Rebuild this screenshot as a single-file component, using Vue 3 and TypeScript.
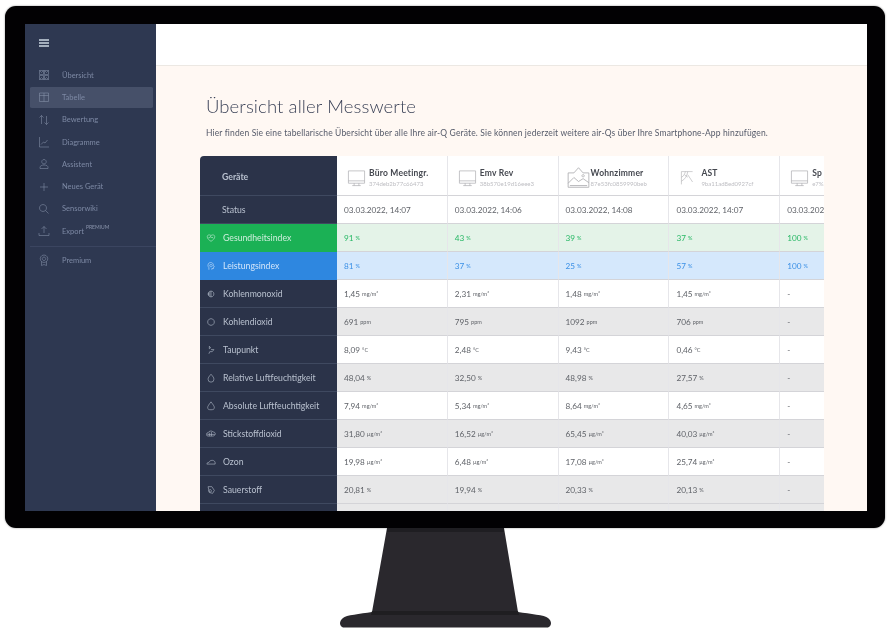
<template>
  <div class="page">
    <div class="monitor">
      <div class="screen">
        <aside class="side">
          <div class="burger"><span></span><span></span><span></span></div>
          <nav class="nav">
            <div v-for="n in nav" :key="n.label" class="nav-item" :class="{ active: n.active, gapped: n.label === 'Premium' }">
              <svg class="nav-icon" viewBox="0 0 24 24" fill="none" stroke="currentColor" stroke-width="1"><path :d="n.icon" /></svg>
              <span class="nav-label">{{ n.label }}</span>
              <sup v-if="n.label === 'Export'" class="sup">PREMIUM</sup>
            </div>
          </nav>
        </aside>
        <main class="main">
          <div class="topbar"></div>
          <div class="content">
            <h1>Übersicht aller Messwerte</h1>
            <p>Hier finden Sie eine tabellarische Übersicht über alle Ihre air-Q Geräte. Sie können jederzeit weitere air-Qs über Ihre Smartphone-App hinzufügen.</p>
            <div class="table">
              <div class="row head">
                <div class="label"><span class="label-text">Geräte</span></div>
                <div v-for="d in devices" :key="d.name" class="cell device">
                  <svg class="dev-icon" :class="'kind-' + d.kind" viewBox="0 0 20 18" fill="none" stroke="#a9a9ad" stroke-width=".7"><path :d="iconFor(d.kind)" /></svg>
                  <div class="dev-text">
                    <div class="dev-name">{{ d.name }}</div>
                    <div class="dev-id">{{ d.id }}</div>
                  </div>
                </div>
              </div>
              <div class="row status">
                <div class="label"><span class="label-text">Status</span></div>
                <div v-for="(s, i) in statuses" :key="i" class="cell">{{ s }}</div>
              </div>
              <div v-for="(r, ri) in rows" :key="r.name" class="row" :class="[r.tone ?? (ri % 2 === 0 ? 'even' : 'odd')]">
                <div class="label">
                  <svg class="row-icon" viewBox="0 0 24 24" fill="none" stroke="currentColor" stroke-width="1.4"><path :d="r.icon" /></svg>
                  <span class="label-text">{{ r.name }}</span>
                </div>
                <div v-for="(v, i) in r.values" :key="i" class="cell">
                  <span>{{ v }}</span><small v-if="v !== '-'">{{ r.unit }}</small>
                </div>
              </div>
              <div class="row odd">
                <div class="label"></div>
                <div v-for="i in 5" :key="i" class="cell"></div>
              </div>
            </div>
          </div>
        </main>
      </div>
    </div>
    <svg class="stand" width="890" height="106" viewBox="0 0 890 106">
      <path d="M387 0H504L518 84C530 86 545 87 548 90C552 93 552 98 548 99.500H343C339 98 339 93 343 90C346 87 360 86 372 84Z" fill="#2a282d" />
      <path d="M387 0H504V4H387Z" fill="#1f1e22" />
      <path d="M372 83H518L519 87H371Z" fill="#1f1e21" />
    </svg>
  </div>
</template>

<script setup lang="ts">
type Kind = 'monitor' | 'picture' | 'web'

const nav = [
  { label: 'Übersicht', icon: 'M3 3h8v8H3zM13 3h8v8h-8zM3 13h8v8H3zM13 13h8v8h-8zM7 7l-4-4M7 7l4-4M17 7l-4-4M17 7l4-4M7 17l-4 4M7 17l4 4M17 17l-4 4M17 17l4 4' },
  { label: 'Tabelle', active: true, icon: 'M3 4h18v17H3zM3 9h18M12 4v17' },
  { label: 'Bewertung', icon: 'M7 20V3M3 7l4-4 4 4M17 4v17M13 17l4 4 4-4' },
  { label: 'Diagramme', icon: 'M3 2v20h19M6 17l5-5 3 2 5-6' },
  { label: 'Assistent', icon: 'M12 3a4.500 4.500 0 1 0 .01 0M4 21v-2c0-3 3-5 8-5s8 2 8 5v2z' },
  { label: 'Neues Gerät', icon: 'M12 4v16M4 12h16' },
  { label: 'Sensorwiki', icon: 'M10 3a7 7 0 1 0 .01 0M15 15l6 6' },
  { label: 'Export', icon: 'M12 16V3M7 8l5-5 5 5M2 16v5h20v-5' },
  { label: 'Premium', icon: 'M12 2a7.500 7.500 0 1 0 .01 0M12 6a3.500 3.500 0 1 0 .01 0M7 15v8l5-2 5 2v-8' },
]

const devices: { name: string; id: string; kind: Kind }[] = [
  { name: 'Büro Meetingr.', id: '374deb2b77c66473', kind: 'monitor' },
  { name: 'Emv Rev', id: '38b570e19d16eee3', kind: 'monitor' },
  { name: 'Wohnzimmer', id: '87e53fc0859990beb', kind: 'picture' },
  { name: 'AST', id: '9ba11ad8ed0927cf', kind: 'web' },
  { name: 'Sp', id: 'e7%', kind: 'monitor' },
]

function iconFor(kind: Kind): string {
  if (kind === 'picture') return 'M1 5h5l4-4.500L14 5h5v12.500H1zM1 14l5-5 4 3.500 4-2.500 5 3.500M14 6.500a1 1 0 1 0 .01 0M2.500 16h15'
  if (kind === 'web') return 'M3 1v16M3 1h14M3 13c4-2 7-6 8-12M3 8c3-1 4-4 5-7M11 5l6 9M7 5l4 3'
  return 'M1.500 1.500h17v13h-17zM1.500 12h17M7.500 14.500v2.500M12.500 14.500v2.500M5.500 17h9'
}

const statuses = ['03.03.2022, 14:07', '03.03.2022, 14:06', '03.03.2022, 14:08', '03.03.2022, 14:07', '03.03.2022, 14:07']

const rows: { name: string; unit: string; values: string[]; icon: string; tone?: string }[] = [
  { name: 'Gesundheitsindex', unit: '%', tone: 'green', values: ['91', '43', '39', '37', '100'], icon: 'M12 20C6 16 3 13 3 8.500 3 5 8 3 12 6c4-3 9-1 9 2.500C21 13 18 16 12 20ZM6 11h3l2-3 2 4 1-1h3' },
  { name: 'Leistungsindex', unit: '%', tone: 'blue', values: ['81', '37', '25', '57', '100'], icon: 'M7 21v-5C4 13 4 8 7 5c4-3 11-1 11 6l2 3-2 1v3h-4v3M12 8a3 3 0 1 0 .01 0' },
  { name: 'Kohlenmonoxid', unit: 'mg/m³', values: ['1,45', '2,31', '1,48', '1,45', '-'], icon: 'M12 5a7 7 0 1 0 .01 0M12 5v14M9 7v10M6 9v6' },
  { name: 'Kohlendioxid', unit: 'ppm', values: ['691', '795', '1092', '706', '-'], icon: 'M12 4a8 8 0 1 0 .01 0' },
  { name: 'Taupunkt', unit: '°C', values: ['8,09', '2,48', '9,43', '0,46', '-'], icon: 'M8 3l3 4-3 2zM12 11h7l-4 5H9l-2 5' },
  { name: 'Relative Luftfeuchtigkeit', unit: '%', values: ['48,04', '32,50', '48,98', '27,57', '-'], icon: 'M12 3c5 6 7 8 7 12a7 7 0 0 1-14 0c0-4 2-6 7-12Z' },
  { name: 'Absolute Luftfeuchtigkeit', unit: 'mg/m³', values: ['7,94', '5,34', '8,64', '4,65', '-'], icon: 'M12 2c5 7 8 10 8 14 0 4-3 5-8 5s-8-1-8-5c0-4 3-7 8-14Z' },
  { name: 'Stickstoffdioxid', unit: 'µg/m³', values: ['31,80', '16,52', '65,45', '40,03', '-'], icon: 'M5 17a4 4 0 0 1 0-8c1-4 9-6 12-2 4 0 6 3 5 6s-4 4-6 4zM3 13h18M8 9v8M13 7v10' },
  { name: 'Ozon', unit: 'µg/m³', values: ['19,98', '6,48', '17,08', '25,74', '-'], icon: 'M2 17c0-3 3-4 5-4 1-3 4-5 8-5s7 3 7 6v3z' },
  { name: 'Sauerstoff', unit: '%', values: ['20,81', '19,94', '20,33', '20,13', '-'], icon: 'M5 4h9l6 9-4 7-8-2zM10 11a3 3 0 1 0 .01 0' },
]
</script>

<style>
html, body { margin: 0; background: #fff; }
</style>

<style scoped>
.page {
  width: 890px;
  height: 634px;
  overflow: hidden;
  font-family: "Lato", "Noto Sans", sans-serif;
}
.monitor {
  margin: 6px 5px 0;
  width: 880px;
  height: 522px;
  box-sizing: border-box;
  padding: 18px 18px 17px 20px;
  background: #020103;
  border-radius: 11px;
  box-shadow: 0 0 2px #888;
}
.screen {
  display: flex;
  height: 487px;
  overflow: hidden;
  background: #fff8f3;
  filter: blur(.35px);
}
.side {
  width: 131px;
  flex: none;
  background: #2e3851;
  color: #7d89a4;
}
.burger {
  display: flex;
  flex-direction: column;
  gap: 1.500px;
  padding: 15px 0 0 14px;
  height: 24px;
  box-sizing: content-box;
}
.burger span {
  width: 10px;
  height: 1.500px;
  background: #a4afbd;
}
.nav {
  padding: 0 3px 0 5px;
  display: flex;
  flex-direction: column;
  margin-top: 1px;
}
.nav-item {
  position: relative;
  display: flex;
  align-items: center;
  box-sizing: border-box;
  height: 22.300px;
  padding-left: 8px;
  border-top: 1px solid transparent;
  border-bottom: 1px solid transparent;
  background-clip: padding-box;
  border-radius: 2px;
  font-size: 7.500px;
}
.nav-item.active {
  background-color: #465069;
}
.nav-item.gapped {
  margin: 7px -3px 0 0;
  height: 22px;
}
.nav-item.gapped::before {
  content: "";
  position: absolute;
  left: 0;
  right: 0;
  top: -4px;
  height: 1px;
  background: #3b4560;
}
.nav-icon {
  width: 12px;
  height: 12px;
  flex: none;
  color: #8e9ab2;
}
.nav-label {
  margin-left: 12px;
}
.sup {
  font-size: 5px;
  margin: -9px 0 0 2px;
  color: #8a94ac;
}
.main {
  flex: 1;
  min-width: 0;
}
.topbar {
  height: 41px;
  background: #fff;
  border-bottom: 1px solid #ece8e3;
}
.content {
  padding: 29px 0 0 44px;
}
h1 {
  margin: 0 0 0 6px;
  font-size: 18.500px;
  line-height: 23px;
  font-weight: 300;
  color: #3c4358;
  letter-spacing: .1px;
}
p {
  margin: 9px 0 0 6px;
  font-size: 8.500px;
  line-height: 12px;
  color: #565b6a;
  letter-spacing: .14px;
  white-space: nowrap;
}
.table {
  margin-top: 17px;
  width: 624px;
  overflow: hidden;
  border-radius: 4px 0 0 0;
}
.row {
  display: grid;
  grid-template-columns: 137px repeat(5, 110.800px);
  height: 28px;
  font-size: 8.200px;
  color: #5f6268;
}
.label {
  display: flex;
  align-items: center;
  background: #2b3349;
  border-bottom: 1px solid #3f4960;
  color: #b9c1cf;
  box-sizing: border-box;
  padding-left: 6px;
  white-space: nowrap;
}
.label-text {
  margin-left: 7px;
  font-size: 8.700px;
}
.row-icon {
  width: 10px;
  height: 10px;
  flex: none;
}
.cell {
  display: flex;
  align-items: center;
  box-sizing: border-box;
  padding-left: 7px;
  background: #fff;
  border-bottom: 1px solid #d4d4d8;
  border-right: 1px solid #e6e6ea;
  white-space: nowrap;
  overflow: hidden;
}
.cell small {
  font-size: 5.500px;
  margin-left: 2px;
}
.head {
  height: 40px;
}
.head .label-text,
.status .label-text {
  margin-left: 16px;
}
.head .label-text {
  font-weight: 700;
  position: relative;
  top: 1px;
}
.device {
  padding: 4px 0 0 10px;
  gap: 3px;
}
.dev-icon {
  width: 19px;
  height: 18px;
  flex: none;
}
.dev-icon.kind-picture {
  width: 23px;
  height: 21px;
  margin: 0 -2px 0 -2px;
}
.dev-icon.kind-web {
  width: 16px;
  margin: 0 3px 0 0;
}
.dev-name {
  font-size: 8.500px;
  font-weight: 700;
  color: #44474f;
  letter-spacing: .2px;
}
.dev-id {
  font-size: 6px;
  color: #bdbdc2;
  margin-top: 2px;
}
.even .cell {
  background: #fff;
}
.odd .cell {
  background: #e8e8e9;
}
.green .label {
  background: #1bb155;
  border-color: #1bb155;
  color: #cfeedd;
}
.green .cell {
  background: #e4f3e8;
  color: #27b865;
}
.blue .label {
  background: #2e87e0;
  border-color: #2e87e0;
  color: #d3e6fa;
}
.blue .cell {
  background: #d5e8fc;
  color: #3b90e6;
}
.stand {
  display: block;
}
</style>
